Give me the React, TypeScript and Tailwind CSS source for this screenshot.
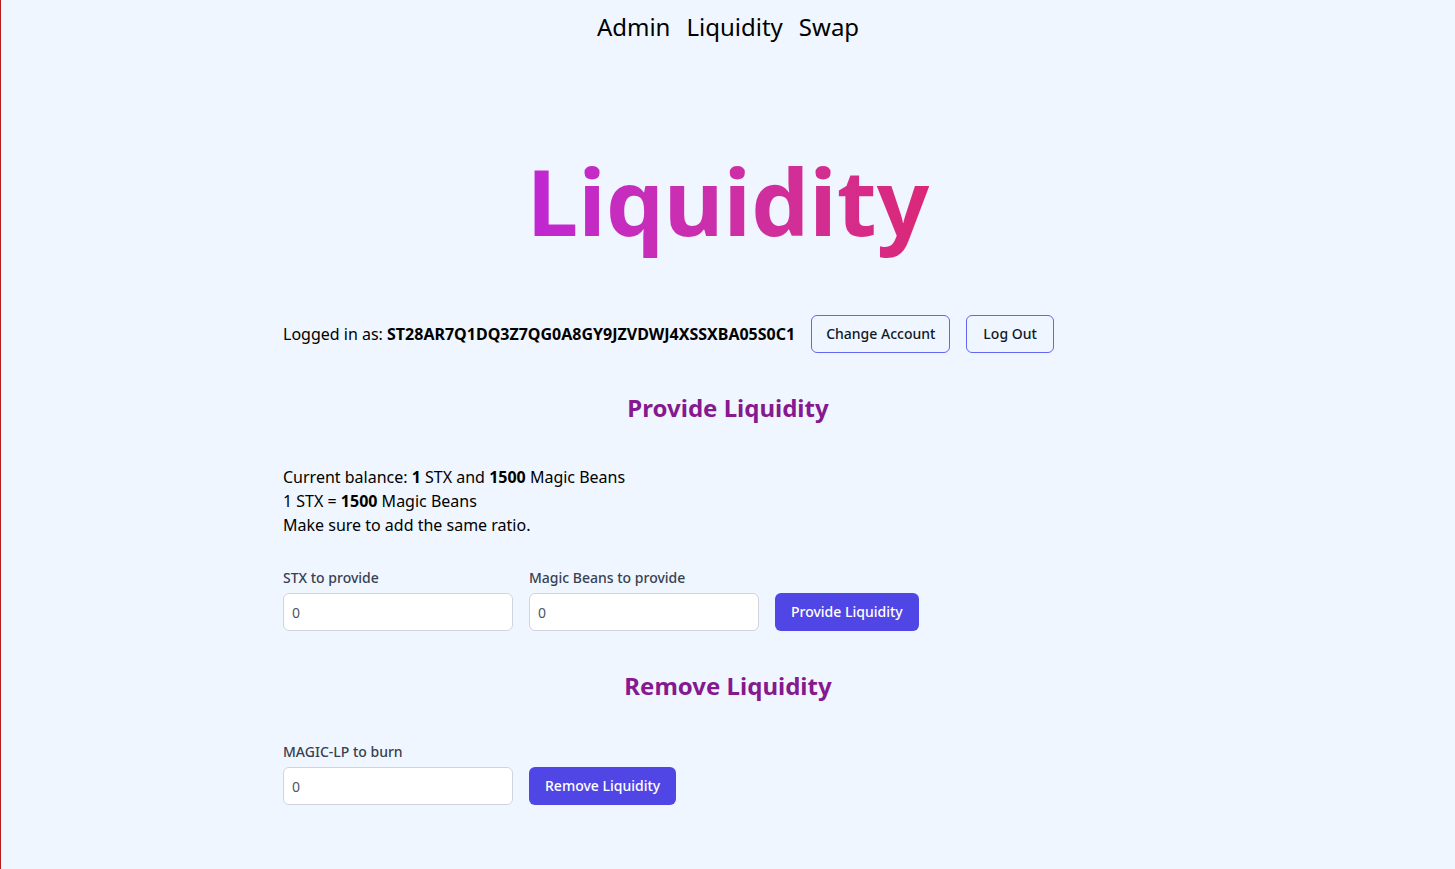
import React from 'react';

export default function App() {
  return (
    <div className="min-h-[869px] bg-[#eff6ff] border-l border-[#b91c1c] text-black" style={{ fontFamily: '"Noto Sans", sans-serif' }}>
      <nav className="flex justify-center gap-4 pt-[11px] text-2xl">
        <a>Admin</a>
        <a>Liquidity</a>
        <a>Swap</a>
      </nav>

      <main className="mx-auto w-[890px]">
        <h1 className="mt-[112px] text-center text-[92px] leading-none font-bold">
          <span className="bg-gradient-to-r from-[#c026d3] to-[#db2777] bg-clip-text text-transparent">Liquidity</span>
        </h1>

        <div className="mt-[68px] flex items-center gap-4">
          <p>
            Logged in as: <b>ST28AR7Q1DQ3Z7QG0A8GY9JZVDWJ4XSSXBA05S0C1</b>
          </p>
          <button className="h-[38px] rounded-md border border-[#6366f1] px-[14px] text-sm font-medium text-gray-900">Change Account</button>
          <button className="h-[38px] rounded-md border border-[#6366f1] px-4 text-sm font-medium text-gray-900">Log Out</button>
        </div>

        <h2 className="mt-[39px] text-center text-2xl font-bold text-[#86198f]">Provide Liquidity</h2>

        <div className="mt-[41px] leading-6">
          <p>Current balance: <b>1</b> STX and <b>1500</b> Magic Beans</p>
          <p>1 STX = <b>1500</b> Magic Beans</p>
          <p>Make sure to add the same ratio.</p>
        </div>

        <div className="mt-[31px] flex items-end gap-4">
          <label className="flex flex-col gap-[5px] text-sm font-medium text-[#374151]">
            STX to provide
            <input defaultValue="0" className="h-[38px] w-[230px] rounded-md border border-[#d1d5db] bg-white px-2 text-sm font-normal text-[#4b5563]" />
          </label>
          <label className="flex flex-col gap-[5px] text-sm font-medium text-[#374151]">
            Magic Beans to provide
            <input defaultValue="0" className="h-[38px] w-[230px] rounded-md border border-[#d1d5db] bg-white px-2 text-sm font-normal text-[#4b5563]" />
          </label>
          <button className="h-[38px] rounded-md bg-[#4f46e5] px-4 text-sm font-medium text-white">Provide Liquidity</button>
        </div>

        <h2 className="mt-[39px] text-center text-2xl font-bold text-[#86198f]">Remove Liquidity</h2>

        <div className="mt-[40px] flex items-end gap-4">
          <label className="flex flex-col gap-[5px] text-sm font-medium text-[#374151]">
            MAGIC-LP to burn
            <input defaultValue="0" className="h-[38px] w-[230px] rounded-md border border-[#d1d5db] bg-white px-2 text-sm font-normal text-[#4b5563]" />
          </label>
          <button className="h-[38px] rounded-md bg-[#4f46e5] px-4 text-sm font-medium text-white">Remove Liquidity</button>
        </div>
      </main>
    </div>
  );
}
